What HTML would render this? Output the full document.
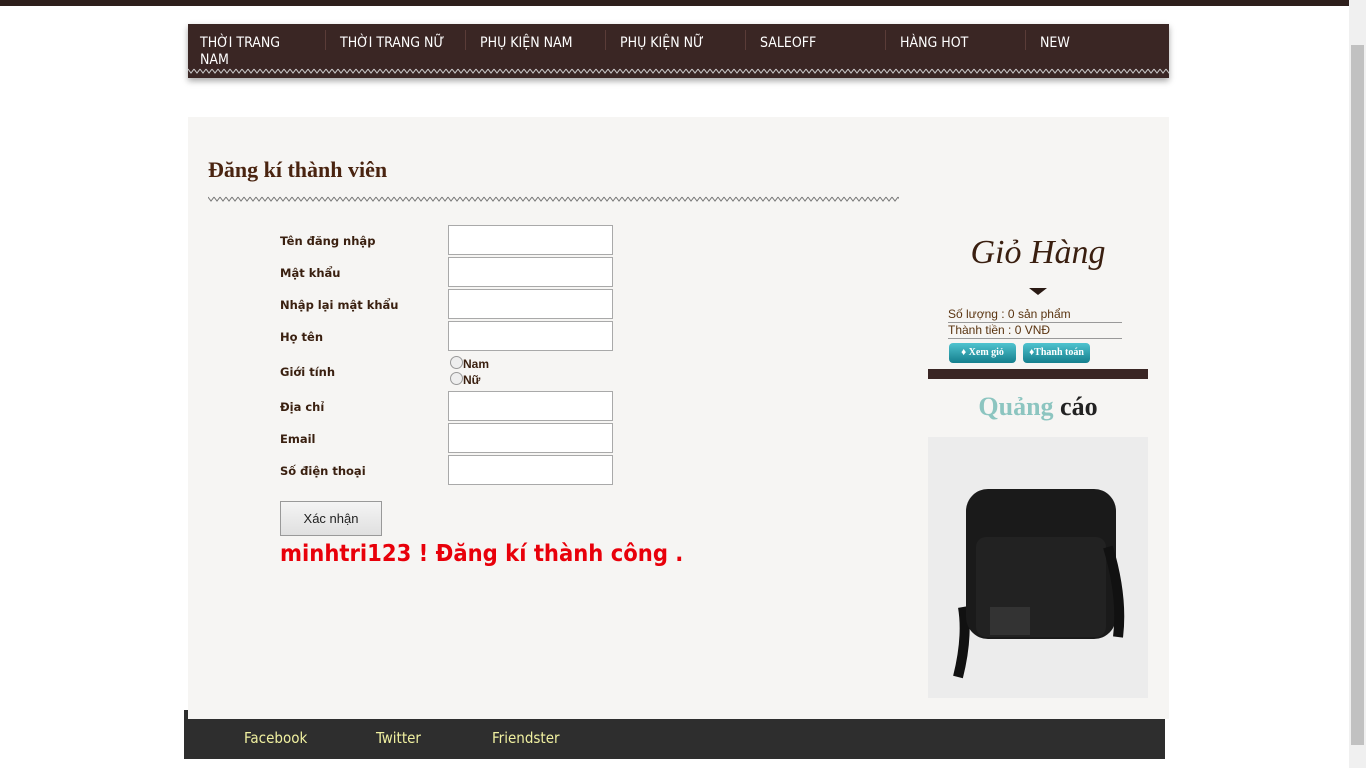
<!DOCTYPE html>
<html><head><meta charset="utf-8"><style>
body{margin:0;width:1366px;height:768px;background:#fff;overflow:hidden;position:relative;font-family:"Liberation Sans",sans-serif}
.abs{position:absolute}
.top{left:0;top:0;width:1349px;height:6px;background:#2e1f1c}
.sb{left:1349px;top:0;width:17px;height:768px;background:#f0f0f0}
.thumb{left:1351px;top:45px;width:13px;height:700px;background:#c1c1c1}
.nav{left:188px;top:24px;width:981px;height:54px;background:#3a2624;box-shadow:0 3px 6px rgba(0,0,0,.35)}
.nav div{position:absolute;top:11px;color:#fff;font-size:14px;line-height:17px;font-family:"DejaVu Sans Condensed","Liberation Sans",sans-serif}
.sep{position:absolute;top:6px;width:1px;height:20px;background:#5a3c38}
.main{left:188px;top:117px;width:981px;height:602px;background:#f6f5f3}
h1{position:absolute;left:208px;top:157px;margin:0;font:bold 22px "Liberation Serif",serif;color:#4a2410}
.lbl{position:absolute;left:280px;font-size:11.5px;font-weight:bold;color:#3a2010;font-family:"DejaVu Sans","Liberation Sans",sans-serif}
.inp{position:absolute;left:448px;width:163px;height:28px;border:1px solid #a9a9a9;background:#fff}
.foot{left:184px;top:719px;width:981px;height:40px;background:#2e2e2e}
.foot span{position:absolute;top:10px;color:#f0f0a0;font-size:15px;font-family:"DejaVu Sans Condensed","Liberation Sans",sans-serif}
.btn{position:absolute;top:343px;height:20px;border-radius:4px;background:linear-gradient(#4fc3cf,#157f8d);color:#fff;font:bold 10px "Liberation Serif",serif;line-height:20px;text-align:center}
</style></head><body>
<div class="abs top"></div>
<div class="abs sb"></div><div class="abs thumb"></div>
<div class="abs nav">
<div style="left:12px">THỜI TRANG<br>NAM</div><span class="sep" style="left:137px"></span>
<div style="left:152px">THỜI TRANG NỮ</div><span class="sep" style="left:277px"></span>
<div style="left:292px">PHỤ KIỆN NAM</div><span class="sep" style="left:417px"></span>
<div style="left:432px">PHỤ KIỆN NỮ</div><span class="sep" style="left:557px"></span>
<div style="left:572px">SALEOFF</div><span class="sep" style="left:697px"></span>
<div style="left:712px">HÀNG HOT</div><span class="sep" style="left:837px"></span>
<div style="left:852px">NEW</div>
<svg style="position:absolute;left:0;top:44px" width="981" height="6"><defs><pattern id="z" width="6" height="6" patternUnits="userSpaceOnUse"><polyline points="0,1 3,5 6,1" fill="none" stroke="#ccc"/></pattern></defs><rect width="981" height="6" fill="url(#z)"/></svg>
</div>
<div class="abs main"></div>
<h1>Đăng kí thành viên</h1>
<svg class="abs" style="left:208px;top:196px" width="691" height="7"><defs><pattern id="z2" width="6" height="6" patternUnits="userSpaceOnUse"><polyline points="0,1 3,5 6,1" fill="none" stroke="#777"/></pattern></defs><rect width="691" height="6" fill="url(#z2)"/></svg>
<div class="lbl" style="top:234px">Tên đăng nhập</div><div class="inp" style="top:225px"></div>
<div class="lbl" style="top:266px">Mật khẩu</div><div class="inp" style="top:257px"></div>
<div class="lbl" style="top:298px">Nhập lại mật khẩu</div><div class="inp" style="top:289px"></div>
<div class="lbl" style="top:330px">Họ tên</div><div class="inp" style="top:321px"></div>
<div class="lbl" style="top:365px">Giới tính</div>
<div class="abs" style="left:450px;top:356px;font-size:12px;font-weight:bold;color:#3a2010;line-height:16px"><span style="display:inline-block;width:11px;height:11px;border:1px solid #999;border-radius:50%;background:#eee;vertical-align:-1px"></span>Nam<br><span style="display:inline-block;width:11px;height:11px;border:1px solid #999;border-radius:50%;background:#eee;vertical-align:-1px"></span>Nữ</div>
<div class="lbl" style="top:400px">Địa chỉ</div><div class="inp" style="top:391px"></div>
<div class="lbl" style="top:432px">Email</div><div class="inp" style="top:423px"></div>
<div class="lbl" style="top:464px">Số điện thoại</div><div class="inp" style="top:455px"></div>
<div class="abs" style="left:280px;top:501px;width:100px;height:33px;border:1px solid #999;background:linear-gradient(#f4f4f4,#e0e0e0);font-size:13px;line-height:33px;text-align:center;color:#222">Xác nhận</div>
<div class="abs" style="left:280px;top:539px;font-size:23.5px;font-weight:bold;color:#e8000a;font-family:'DejaVu Sans Condensed','Liberation Sans',sans-serif">minhtri123 ! Đăng kí thành công .</div>
<div class="abs" style="left:928px;top:234px;width:220px;text-align:center;font:34px 'Liberation Serif',serif;font-style:italic;color:#3a1f10">Giỏ Hàng</div>
<div class="abs" style="left:1029px;top:288px;width:0;height:0;border-left:9px solid transparent;border-right:9px solid transparent;border-top:7px solid #2a1a14"></div>
<div class="abs" style="left:948px;top:307px;width:174px;font-size:12px;color:#5a3410;line-height:15px"><div style="border-bottom:1px solid #999">Số lượng : 0 sản phẩm</div><div style="border-bottom:1px solid #999">Thành tiền : 0 VNĐ</div></div>
<div class="btn" style="left:949px;width:67px">♦ Xem giỏ</div>
<div class="btn" style="left:1023px;width:67px">♦Thanh toán</div>
<div class="abs" style="left:928px;top:369px;width:220px;height:10px;background:#3a2624"></div>
<div class="abs" style="left:928px;top:392px;width:220px;text-align:center;font:bold 26px 'Liberation Serif',serif"><span style="color:#8cc5c0">Quảng</span> <span style="color:#222">cáo</span></div>
<div class="abs" style="left:928px;top:437px;width:220px;height:261px;background:#ececec">
<svg width="220" height="261"><path d="M30 240 Q40 200 35 170" stroke="#111" stroke-width="10" fill="none"/><rect x="38" y="52" width="150" height="150" rx="22" fill="#1a1a1a"/><rect x="48" y="100" width="130" height="100" rx="10" fill="#222"/><rect x="62" y="170" width="40" height="28" fill="#333"/><path d="M180 110 Q195 160 190 200" stroke="#111" stroke-width="10" fill="none"/></svg></div>
<div class="abs" style="left:184px;top:710px;width:4px;height:9px;background:#2e2e2e"></div>
<div class="abs foot"><span style="left:60px">Facebook</span><span style="left:192px">Twitter</span><span style="left:308px">Friendster</span></div>
</body></html>
